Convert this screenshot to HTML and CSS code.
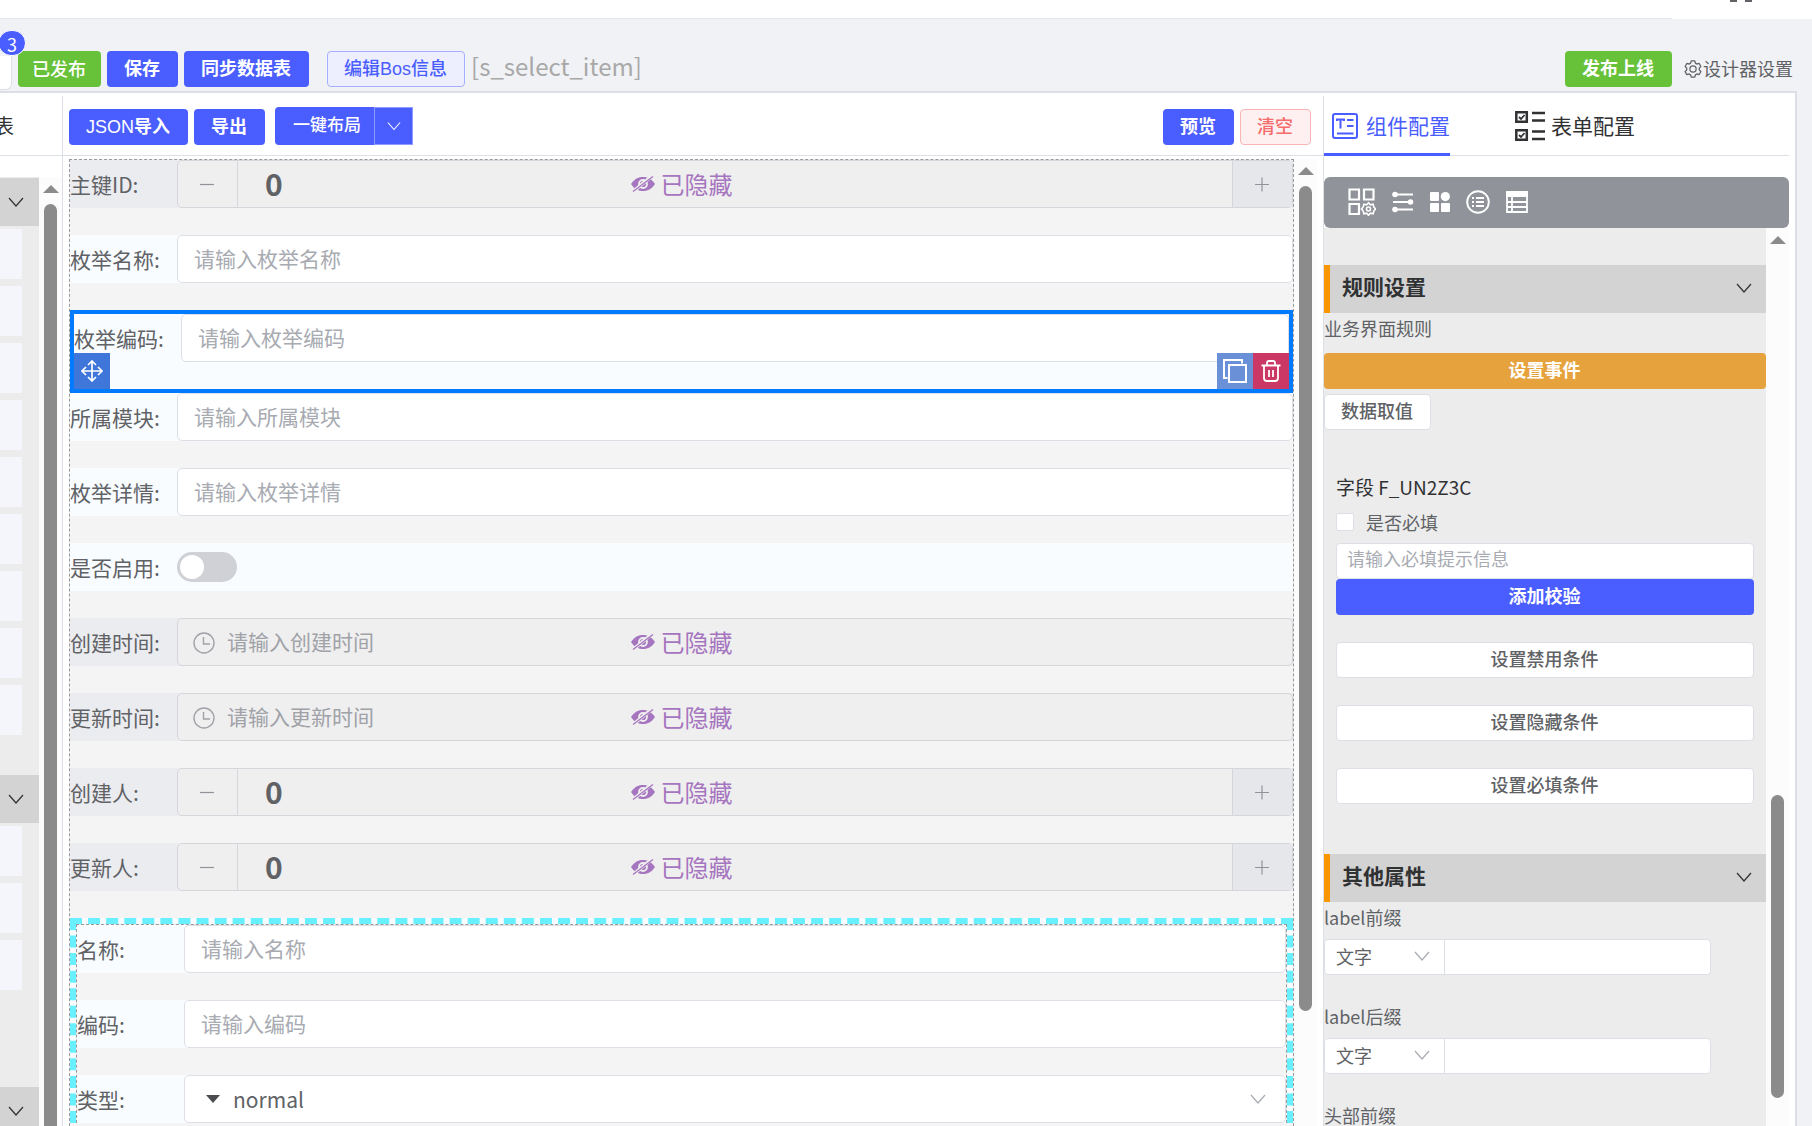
FILE: index.html
```html
<!DOCTYPE html>
<html lang="zh-CN">
<head>
  <meta charset="UTF-8">
  <title>表单设计器</title>
  <link rel="stylesheet" href="styles.css">
</head>
<body>

<!-- shared icons -->
<svg class="sprite" aria-hidden="true">
  <symbol id="i-down" viewBox="0 0 16 16"><path d="M1 4l7 8 7-8" fill="none" stroke="currentColor" stroke-width="1.2"/></symbol>
  <symbol id="i-minus" viewBox="0 0 16 16"><path d="M1 8.500h14" fill="none" stroke="currentColor" stroke-width="1.2"/></symbol>
  <symbol id="i-plus" viewBox="0 0 16 16"><path d="M1 8.500h14M8 1.500v14" fill="none" stroke="currentColor" stroke-width="1.2"/></symbol>
  <symbol id="i-clock" viewBox="0 0 22 22"><circle cx="11" cy="11" r="10" fill="none" stroke="currentColor" stroke-width="1.4"/><path d="M10.500 5v7h6.500" fill="none" stroke="currentColor" stroke-width="1.4"/></symbol>
  <symbol id="i-hide" viewBox="0 0 24 16"><path d="M0 8C4 2 8 1 12 1s8 1 12 7c-4 6-8 7-12 7S4 14 0 8z" fill="currentColor"/><circle cx="12" cy="8" r="4" fill="none" stroke="#efefef" stroke-width="1.800"/><path d="M1.500 16L21 0" stroke="#efefef" stroke-width="3.500"/><path d="M2 15.500L22 0.500" stroke="currentColor" stroke-width="1.300"/></symbol>
  <symbol id="i-gear" viewBox="0 0 1024 1024"><path fill="currentColor" d="M600.700 64a32 32 0 0 1 30.500 22.200l35.200 109.400c14.800 7.200 28.900 15.400 42.400 24.500l112.400-24.200a32 32 0 0 1 34.400 15.300L944.300 364.800a32 32 0 0 1-4 37.500l-77.100 85.100a357.100 357.100 0 0 1 0 49l77.100 85.200a32 32 0 0 1 4 37.500l-88.700 153.600a32 32 0 0 1-34.400 15.300L708.800 803.900c-13.400 9.100-27.600 17.300-42.300 24.500l-35.300 109.400A32 32 0 0 1 600.700 960H423.300a32 32 0 0 1-30.500-22.200L357.700 828.500a351.600 351.600 0 0 1-42.600-24.600l-112.300 24.200a32 32 0 0 1-34.400-15.300L79.700 659.200a32 32 0 0 1 4-37.500l77.100-85.200a357.100 357.100 0 0 1 0-48.900l-77.100-85.200a32 32 0 0 1-4-37.500l88.700-153.600a32 32 0 0 1 34.400-15.300l112.300 24.200a351 351 0 0 1 42.600-24.600l35.200-109.400A32 32 0 0 1 423.200 64h177.500zM577.300 128H446.700l-36.400 113.100-24.500 12a294 294 0 0 0-34.800 20.100l-22.600 15.300-116.300-25-65.300 113 79.700 88.200-1.900 27.100a293 293 0 0 0 0 40.200l1.900 27.100-79.800 88.200 65.300 113 116.300-25 22.600 15.300a294 294 0 0 0 34.800 20.100l24.500 12L446.700 896h130.700l36.500-113.200 24.400-11.900a288 288 0 0 0 34.700-20.100l22.600-15.300 116.400 25 65.300-113-79.800-88.200 1.900-27.100a293 293 0 0 0 0-40.300l-1.900-27.100 79.800-88.100-65.300-113-116.400 24.900-22.600-15.200a288 288 0 0 0-34.700-20.100l-24.400-12L577.300 128zM512 320a192 192 0 1 1 0 384 192 192 0 0 1 0-384m0 64a128 128 0 1 0 0 256 128 128 0 0 0 0-256"/></symbol>
</svg>

<header class="topbar">
  <div class="topbar-line"></div>
  <svg class="topbar-mark" width="22" height="2" viewBox="0 0 22 2"><path d="M0 0h7v2H0zM15 0h7v2h-7z" fill="#606266"/></svg>
</header>

<div class="actions">
  <span class="stub"></span>
  <span class="badge">3</span>
  <button class="btn btn-success btn-light">已发布</button>
  <button class="btn btn-primary">保存</button>
  <button class="btn btn-primary">同步数据表</button>
  <button class="btn btn-plain">编辑Bos信息</button>
  <span class="bos-name">[s_select_item]</span>
  <button class="btn btn-success btn-publish">发布上线</button>
  <a class="settings" href="#"><svg width="20" height="20"><use href="#i-gear"/></svg>设计器设置</a>
</div>

<div class="designer">

  <aside class="widgets">
    <div class="bar widgets-tab">表</div>
    <div class="pane">
      <div class="pane-content">
        <div class="group">
          <button class="group-head" aria-label="折叠"><svg width="16" height="16"><use href="#i-down"/></svg></button>
          <ul>
            <li></li><li></li><li></li><li></li><li></li><li></li><li></li><li></li><li></li>
          </ul>
        </div>
        <div class="group">
          <button class="group-head" aria-label="折叠"><svg width="16" height="16"><use href="#i-down"/></svg></button>
          <ul>
            <li></li><li></li><li></li><li class="empty"></li>
          </ul>
        </div>
        <div class="group">
          <button class="group-head" aria-label="折叠"><svg width="16" height="16"><use href="#i-down"/></svg></button>
        </div>
      </div>
      <div class="scroll"><i class="arrow"></i><i class="thumb" style="height: 100%"></i></div>
    </div>
  </aside>

  <main class="center">
    <div class="bar toolbar">
      <button class="btn btn-primary">JSON<b>导入</b></button>
      <button class="btn btn-primary">导出</button>
      <div class="split">
        <button class="btn btn-primary split-main">一键布局</button>
        <button class="btn btn-primary split-arrow" aria-label="更多"><svg width="14" height="14"><use href="#i-down"/></svg></button>
      </div>
      <button class="btn btn-primary btn-preview">预览</button>
      <button class="btn btn-danger">清空</button>
    </div>
    <div class="canvas-wrap">
      <form class="canvas">
        <div class="row hidden-row">
          <label for="f-id">主键ID:</label>
          <div class="number">
            <button type="button" aria-label="减少"><svg width="16" height="16"><use href="#i-minus"/></svg></button>
            <input id="f-id" value="0" disabled>
            <button type="button" class="plus" aria-label="增加"><svg width="16" height="16"><use href="#i-plus"/></svg></button>
          </div>
          <span class="mask"><svg width="24" height="16"><use href="#i-hide"/></svg>已隐藏</span>
        </div>
        <div class="row">
          <label for="f-name">枚举名称:</label>
          <input class="field" id="f-name" placeholder="请输入枚举名称">
        </div>
        <div class="selected">
          <div class="row">
            <label for="f-code">枚举编码:</label>
            <input class="field" id="f-code" placeholder="请输入枚举编码">
          </div>
          <button type="button" class="tool tool-move" aria-label="移动"><svg width="22" height="22" viewBox="0 0 22 22" fill="none" stroke="#fff" stroke-width="1.700"><path d="M11 1v20M1 11h20M7 5l4-4 4 4M7 17l4 4 4-4M5 7l-4 4 4 4M17 7l4 4-4 4"/></svg></button>
          <div class="tools">
            <button type="button" class="tool tool-copy" aria-label="复制"><svg width="24" height="24" viewBox="0 0 24 24" fill="none" stroke="#fff" stroke-width="2"><path d="M6 6h17v17H6zM4.500 19H1V1h18v3.500"/></svg></button>
            <button type="button" class="tool tool-delete" aria-label="删除"><svg width="20" height="22" viewBox="0 0 20 22" fill="none" stroke="#fff" stroke-width="1.800"><path d="M0.500 5.500h19M6 5V3q0-2 2-2h4q2 0 2 2v2M3 6v12q0 3 3 3h8q3 0 3-3V6M8 10v7M12 10v7"/></svg></button>
          </div>
        </div>
        <div class="row">
          <label for="f-module">所属模块:</label>
          <input class="field" id="f-module" placeholder="请输入所属模块">
        </div>
        <div class="row">
          <label for="f-detail">枚举详情:</label>
          <input class="field" id="f-detail" placeholder="请输入枚举详情">
        </div>
        <div class="row">
          <label for="f-enable">是否启用:</label>
          <input class="switch" id="f-enable" type="checkbox" role="switch">
        </div>
        <div class="row hidden-row">
          <label for="f-ctime">创建时间:</label>
          <div class="date"><svg width="22" height="22"><use href="#i-clock"/></svg><input id="f-ctime" placeholder="请输入创建时间" disabled></div>
          <span class="mask"><svg width="24" height="16"><use href="#i-hide"/></svg>已隐藏</span>
        </div>
        <div class="row hidden-row">
          <label for="f-utime">更新时间:</label>
          <div class="date"><svg width="22" height="22"><use href="#i-clock"/></svg><input id="f-utime" placeholder="请输入更新时间" disabled></div>
          <span class="mask"><svg width="24" height="16"><use href="#i-hide"/></svg>已隐藏</span>
        </div>
        <div class="row hidden-row">
          <label for="f-creator">创建人:</label>
          <div class="number">
            <button type="button" aria-label="减少"><svg width="16" height="16"><use href="#i-minus"/></svg></button>
            <input id="f-creator" value="0" disabled>
            <button type="button" class="plus" aria-label="增加"><svg width="16" height="16"><use href="#i-plus"/></svg></button>
          </div>
          <span class="mask"><svg width="24" height="16"><use href="#i-hide"/></svg>已隐藏</span>
        </div>
        <div class="row hidden-row">
          <label for="f-updater">更新人:</label>
          <div class="number">
            <button type="button" aria-label="减少"><svg width="16" height="16"><use href="#i-minus"/></svg></button>
            <input id="f-updater" value="0" disabled>
            <button type="button" class="plus" aria-label="增加"><svg width="16" height="16"><use href="#i-plus"/></svg></button>
          </div>
          <span class="mask"><svg width="24" height="16"><use href="#i-hide"/></svg>已隐藏</span>
        </div>
        <div class="sub">
          <div class="sub-inner">
            <div class="row">
              <label for="s-name">名称:</label>
              <input class="field" id="s-name" placeholder="请输入名称">
            </div>
            <div class="row">
              <label for="s-code">编码:</label>
              <input class="field" id="s-code" placeholder="请输入编码">
            </div>
            <div class="row">
              <label for="s-type">类型:</label>
              <div class="select-box">
                <svg width="14" height="8" viewBox="0 0 14 8"><path d="M0 0h14L7 8z" fill="#4a4c50"/></svg>
                <select id="s-type"><option>normal</option></select>
                <svg class="caret" width="16" height="16"><use href="#i-down"/></svg>
              </div>
            </div>
          </div>
        </div>
      </form>
      <div class="scroll"><i class="arrow"></i><i class="thumb" style="height: 86%"></i></div>
    </div>
  </main>

  <aside class="config">
    <nav class="bar tabs">
      <a class="tab active" href="#">
        <svg width="26" height="26" viewBox="0 0 26 26" fill="none" stroke="currentColor" stroke-width="2"><rect x="1" y="1" width="24" height="24" rx="2"/><path d="M5 6.500h7M8.500 6v9.500M5 5.500v2.500M12 5.500v2.500M15 7h6.500M15 13h6.500M5 20.500h16.500"/></svg>
        组件配置
      </a>
      <a class="tab" href="#">
        <svg width="30" height="30" viewBox="0 0 30 30" fill="none" stroke="currentColor" stroke-width="2.500"><path d="M1.300 1.300h10.500v9.500H1.300zM1.300 19.200h10.500v9.500H1.300zM17 2h13M17 9.500h13M17 20.500h13M17 28h13"/><path d="M4 6l2 2 3.500-4M4 24l2 2 3.500-4" stroke-width="1.800"/></svg>
        表单配置
      </a>
    </nav>
    <div class="config-icons">
      <svg width="28" height="28" viewBox="0 0 28 28" fill="none" stroke="#fff" stroke-width="2.200"><path d="M1.500 1.500h9.500v10H1.500zM16 1.500h9.500v10H16zM1.500 16h9.500v10H1.500z"/><path d="M20.500 14.800l1.900 2 2.700-.6.700 2.700 1.700 2.100-1.700 2.100-.7 2.700-2.700-.6-1.900 2-1.900-2-2.700.6-.7-2.700-1.700-2.100 1.700-2.100.7-2.700 2.700.6z" stroke-width="1.600"/><circle cx="20.500" cy="21" r="2" stroke-width="1.600"/></svg>
      <svg width="22" height="22" viewBox="0 0 22 22" fill="#fff" stroke="#fff" stroke-width="2.200"><path d="M2 3.500h19M1 11h18M2 18.500h19"/><g stroke="none"><circle cx="3" cy="3.500" r="2.800"/><circle cx="18.500" cy="11" r="2.800"/><circle cx="3" cy="18.500" r="2.800"/></g></svg>
      <svg width="20" height="20" viewBox="0 0 20 20" fill="#fff"><rect width="9" height="9" rx="1"/><circle cx="15.300" cy="4.600" r="4.600"/><rect y="11" width="9" height="9" rx="1"/><rect x="11" y="11" width="9" height="9" rx="1"/></svg>
      <svg width="24" height="24" viewBox="0 0 24 24" fill="none" stroke="#fff" stroke-width="1.900"><circle cx="12" cy="12" r="10.800"/><path d="M6 8h2M10 8h8M6 12h2M10 12h8M6 16h2M10 16h8"/></svg>
      <svg width="22" height="22" viewBox="0 0 22 22" fill="none" stroke="#fff" stroke-width="1.800"><path d="M1 1h20v20H1zM1 11h20M1 16h20M6 6v15"/><path d="M0 0h22v6H0z" fill="#fff" stroke="none"/></svg>
    </div>
    <div class="pane">
      <div class="pane-content config-content">
        <h3>规则设置<svg width="16" height="16"><use href="#i-down"/></svg></h3>
        <p class="caption caption-wide">业务界面规则</p>
        <button class="btn btn-warning">设置事件</button>
        <button class="btn btn-default btn-value">数据取值</button>
        <div class="rules">
          <p class="field-name">字段 F_UN2Z3C</p>
          <label class="check"><input type="checkbox">是否必填</label>
          <input class="small-input" aria-label="必填提示信息" placeholder="请输入必填提示信息">
          <button class="btn btn-primary">添加校验</button>
          <button class="btn btn-default">设置禁用条件</button>
          <button class="btn btn-default">设置隐藏条件</button>
          <button class="btn btn-default">设置必填条件</button>
        </div>
        <h3>其他属性<svg width="16" height="16"><use href="#i-down"/></svg></h3>
        <label class="caption" for="c-prefix">label前缀</label>
        <div class="affix">
          <div class="affix-type"><select aria-label="前缀类型"><option>文字</option></select><svg class="caret" width="16" height="16"><use href="#i-down"/></svg></div>
          <input id="c-prefix">
        </div>
        <label class="caption" for="c-suffix">label后缀</label>
        <div class="affix">
          <div class="affix-type"><select aria-label="后缀类型"><option>文字</option></select><svg class="caret" width="16" height="16"><use href="#i-down"/></svg></div>
          <input id="c-suffix">
        </div>
        <p class="caption">头部前缀</p>
      </div>
      <div class="scroll scroll-config"><i class="arrow"></i><i class="thumb" style="height: 34%"></i></div>
    </div>
  </aside>

</div>

</body>
</html>
```
FILE: styles.css
```css
* {
  box-sizing: border-box;
}
body {
  margin: 0;
  height: 100vh;
  overflow: hidden;
  display: flex;
  flex-direction: column;
  background: #f1f2f5;
  color: #606266;
  font-family: "Noto Sans CJK SC", sans-serif;
  font-size: 18px;
}
button, input, select {
  font: inherit;
  color: inherit;
  margin: 0;
  padding: 0;
  border: 0;
  background: none;
  outline: 0;
}
button {
  cursor: pointer;
}
select {
  appearance: none;
}
input {
  min-width: 0;
}
input::placeholder {
  color: #a8abb2;
  opacity: 1;
}
a {
  color: inherit;
  text-decoration: none;
}
svg {
  display: block;
  flex: none;
}
ul, p, h3 {
  margin: 0;
  padding: 0;
  list-style: none;
}
.sprite {
  position: absolute;
  width: 0;
  height: 0;
}

/* top */
.topbar {
  flex: none;
  height: 19px;
  background: #fff;
  display: flex;
  align-items: flex-end;
}
.topbar-line {
  flex: 1;
  height: 1px;
  background: #e4e7ed;
}
.topbar-mark {
  align-self: flex-start;
  margin: 0 60px 0 58px;
}
.actions {
  position: relative;
  flex: none;
  height: 72px;
  padding: 0 19px 4px 0;
  display: flex;
  align-items: flex-end;
  gap: 6px;
}
.stub {
  width: 12px;
  height: 34px;
  margin-bottom: -3px;
  background: #fff;
  border: 1px solid #dcdfe6;
  border-width: 0 1px 1px 0;
  border-radius: 0 0 6px 0;
}
.badge {
  position: absolute;
  left: -2px;
  top: 11px;
  width: 28px;
  height: 26px;
  border: 1px solid #fff;
  border-radius: 13px;
  background: #4a5dff;
  color: #fff;
  line-height: 26px;
  text-align: center;
}
.btn {
  height: 36px;
  padding: 0 17px 0 16px;
  border: 1px solid transparent;
  border-radius: 4px;
  font-family: "Liberation Sans", "Noto Sans CJK SC", sans-serif;
  font-size: 18px;
  line-height: 30px;
  font-weight: 700;
  white-space: nowrap;
}
.btn-primary {
  background: #4a5dff;
  color: #fff;
}
.btn-success {
  background: #67c23a;
  color: #fff;
}
.btn-warning {
  background: #e6a23c;
  color: #fff;
}
.btn-danger {
  background: #fef0f0;
  border-color: #fab6b6;
  color: #f56c6c;
  font-weight: 500;
}
.btn-plain {
  margin: 0 0 0 12px;
  background: #edefff;
  border-color: #a5aeff;
  color: #4a5dff;
  font-weight: 500;
}
.btn-default {
  background: #fff;
  border-color: #dcdfe6;
  font-weight: 500;
}
.btn-light {
  padding: 2px 14px 0 13px;
  font-weight: 500;
}
.bos-name {
  font-size: 24px;
  line-height: 42px;
  color: #a8a8a8;
}
.btn-publish {
  margin-left: auto;
}
.settings {
  display: flex;
  align-items: center;
  height: 36px;
  margin-left: 5px;
  padding-bottom: 2px;
}
.settings svg {
  margin-top: 2px;
}

/* layout */
.designer {
  flex: 1;
  min-height: 0;
  margin-right: 15px;
  padding-top: 3px;
  background: #fff;
  border: 2px solid #dcdfe6;
  border-width: 2px 2px 0 0;
  display: grid;
  grid-template-columns: 63px minmax(0, 1fr) 471px;
  grid-template-rows: minmax(0, 1fr);
}
.bar {
  flex: none;
  height: 60px;
  border-bottom: 1px solid #dcdfe6;
  display: flex;
}
.widgets, .center, .config {
  display: flex;
  flex-direction: column;
  min-height: 0;
}
.widgets, .center {
  border-right: 1px solid #dcdfe6;
}
.pane {
  flex: 1;
  min-height: 0;
  display: flex;
}
.pane-content {
  flex: 1;
  overflow: hidden;
  background: #ececec;
}
.scroll {
  flex: none;
  width: 23px;
  padding-top: 8px;
  background: #fcfcfc;
  display: flex;
  flex-direction: column;
  align-items: center;
  gap: 11px;
  overflow: hidden;
}
.arrow {
  flex: none;
  border: 8px solid transparent;
  border-top: 0;
  border-bottom-color: #8b8b8b;
}
.thumb {
  flex: none;
  width: 13px;
  border-radius: 7px;
  background: #8b8b8b;
}

/* widget list */
.widgets-tab {
  justify-content: flex-end;
  align-items: center;
  padding-right: 48px;
  font-size: 20px;
  color: #303133;
}
.widgets .pane {
  margin-top: 21px;
}
.group {
  padding: 1px 0 39px;
}
.group-head {
  display: flex;
  align-items: center;
  width: 100%;
  height: 48px;
  padding-left: 8px;
  background: #d3d3d3;
  color: #303133;
}
.group ul {
  display: grid;
  gap: 7px;
  padding: 3px 17px 0 0;
}
.group li {
  height: 50px;
  background: #f4f6fb;
}
.group .empty {
  background: none;
}

/* canvas */
.toolbar {
  align-items: flex-end;
  gap: 6px;
  padding: 0 12px 10px 6px;
}
.toolbar .btn-primary:first-child {
  font-weight: 500;
}
.split {
  display: flex;
  margin-left: 4px;
}
.split .btn {
  height: 38px;
}
.split .split-main {
  border-radius: 4px 0 0 4px;
  padding: 0 12px 0 17px;
  font-size: 17px;
}
.split .split-arrow {
  border-color: #8f9bff;
  border-radius: 0;
  padding: 0 11px 0 12px;
}
.btn-preview {
  margin-left: auto;
}
.canvas-wrap {
  flex: 1;
  min-height: 0;
  padding: 3px 6px 0;
  display: flex;
}
.canvas {
  flex: 1;
  min-width: 0;
  overflow: hidden;
  border: 1px dashed #999;
  border-bottom: 0;
  background: #f4f4f4;
  font-size: 21px;
}
.row {
  position: relative;
  display: flex;
  align-items: center;
  height: 48px;
  margin-bottom: 27px;
  background: #f8fcff;
}
.row > label {
  flex: none;
  width: 107px;
}
.field, .number, .date, .select-box {
  flex: 1;
  height: 48px;
  border: 1px solid #dcdfe6;
  border-radius: 5px;
  background: #fff;
}
.field {
  padding: 0 16px 2px;
}
.number, .date, .select-box {
  display: flex;
  align-items: center;
  min-width: 0;
}
.hidden-row {
  background: #ebecf0;
}
.hidden-row .number, .hidden-row .date {
  background: #efefef;
  border-color: #d4d6dc;
  color: #a0a2a8;
}
.number button {
  width: 60px;
  height: 46px;
  padding-right: 1px;
  display: flex;
  align-items: center;
  justify-content: center;
  border-right: 1px solid #d4d6dc;
  color: #909399;
}
.number .plus {
  background: #e6e7eb;
  border-right: 0;
  border-left: 1px solid #d4d6dc;
}
.number input {
  flex: 1;
  padding: 0 0 3px 27px;
  font-size: 30px;
  line-height: 40px;
  font-weight: 700;
  color: #606266;
}
.date {
  gap: 12px;
  padding-left: 15px;
}
.date svg {
  margin-top: 2px;
}
.date input {
  flex: 1;
  padding-bottom: 2px;
}
.date input::placeholder {
  color: #a0a2a8;
}
/* sits over a field that is hidden at run time */
.mask {
  position: absolute;
  inset: 0;
  display: flex;
  align-items: center;
  justify-content: center;
  gap: 6px;
  padding-bottom: 2px;
  color: #a675bf;
  font-size: 24px;
}
.mask svg {
  margin-top: 2px;
}
.selected {
  position: relative;
  height: 83px;
  border: 4px solid #007bff;
  background: #f8fcff;
}
.selected .row {
  margin-bottom: 0;
}
.tool-move, .tools {
  position: absolute;
  bottom: 0;
}
.tool-move {
  left: 0;
}
.tools {
  right: 0;
  display: flex;
}
.tool {
  width: 36px;
  height: 36px;
  display: flex;
  align-items: center;
  justify-content: center;
}
.tool-move {
  background: #3f76da;
}
.tool-copy {
  background: #6a90d8;
}
.tool-delete {
  background: #cc3866;
}
.switch {
  appearance: none;
  width: 60px;
  height: 30px;
  padding: 3px;
  border-radius: 15px;
  background: #d0d1d7;
}
.switch::before {
  content: "";
  display: block;
  width: 24px;
  height: 24px;
  border-radius: 50%;
  background: #fff;
}
.sub {
  border: 6px dashed #69f0ff;
  border-bottom: 0;
  background: #f8fcff;
}
.sub-inner {
  border: 1px dashed #999;
  border-bottom: 0;
  background: #f4f4f4;
}
.select-box {
  gap: 13px;
  padding: 0 19px 0 21px;
}
.select-box select {
  flex: 1;
}
.caret {
  color: #a8abb2;
  pointer-events: none;
}

/* config */
.config {
  padding-right: 6px;
}
.tabs {
  gap: 65px;
  font-size: 21px;
  color: #303133;
}
.tab {
  display: flex;
  align-items: center;
  gap: 6px;
  height: 60px;
  padding-top: 1px;
  border-bottom: 3px solid transparent;
}
.tab svg {
  margin-top: 2px;
}
.tab.active {
  gap: 8px;
  padding-left: 8px;
  border-bottom-color: #4a5dff;
  color: #4a5dff;
}
.config-icons {
  flex: none;
  height: 51px;
  margin-top: 21px;
  padding: 0 0 2px 24px;
  display: flex;
  align-items: center;
  gap: 16px;
  border-radius: 6px;
  background: #909399;
}
.config-content {
  display: flex;
  flex-direction: column;
  padding-top: 37px;
}
.config-content > * {
  flex: none;
}
.config-content h3 {
  display: flex;
  align-items: center;
  justify-content: space-between;
  height: 48px;
  padding: 0 14px 6px 12px;
  border-left: 6px solid #fa9600;
  background: #d3d3d3;
  color: #303133;
  font-size: 21px;
}
.config-content h3 svg {
  margin-top: 4px;
}
.caption {
  height: 33px;
  line-height: 31px;
  margin-bottom: 4px;
}
.caption-wide {
  margin-bottom: 7px;
}
.btn-value {
  align-self: flex-start;
  margin-top: 5px;
}
.rules {
  display: flex;
  flex-direction: column;
  padding: 42px 12px 50px;
}
.field-name {
  font-size: 19px;
  line-height: 30px;
  color: #303133;
}
.check {
  display: flex;
  align-items: center;
  gap: 12px;
  height: 41px;
  padding-bottom: 2px;
}
.check input {
  appearance: none;
  width: 18px;
  height: 18px;
  border: 1px solid #dcdfe6;
  border-radius: 2px;
  background: #fff;
}
.small-input {
  height: 36px;
  padding: 0 10px 6px;
  border: 1px solid #dcdfe6;
  border-radius: 4px;
  background: #fff;
}
.rules .btn-default {
  margin-top: 27px;
}
.affix {
  display: flex;
  width: 387px;
  height: 36px;
  margin-bottom: 26px;
  border: 1px solid #dcdfe6;
  border-radius: 4px;
  background: #fff;
}
.affix-type {
  display: flex;
  align-items: center;
  width: 120px;
  padding: 0 14px 0 11px;
  border-right: 1px solid #dcdfe6;
}
.affix-type select, .affix > input {
  flex: 1;
}
.affix-type select {
  padding-bottom: 2px;
}
.affix-type .caret {
  margin-bottom: 2px;
}
.scroll-config {
  gap: 551px;
}
```
